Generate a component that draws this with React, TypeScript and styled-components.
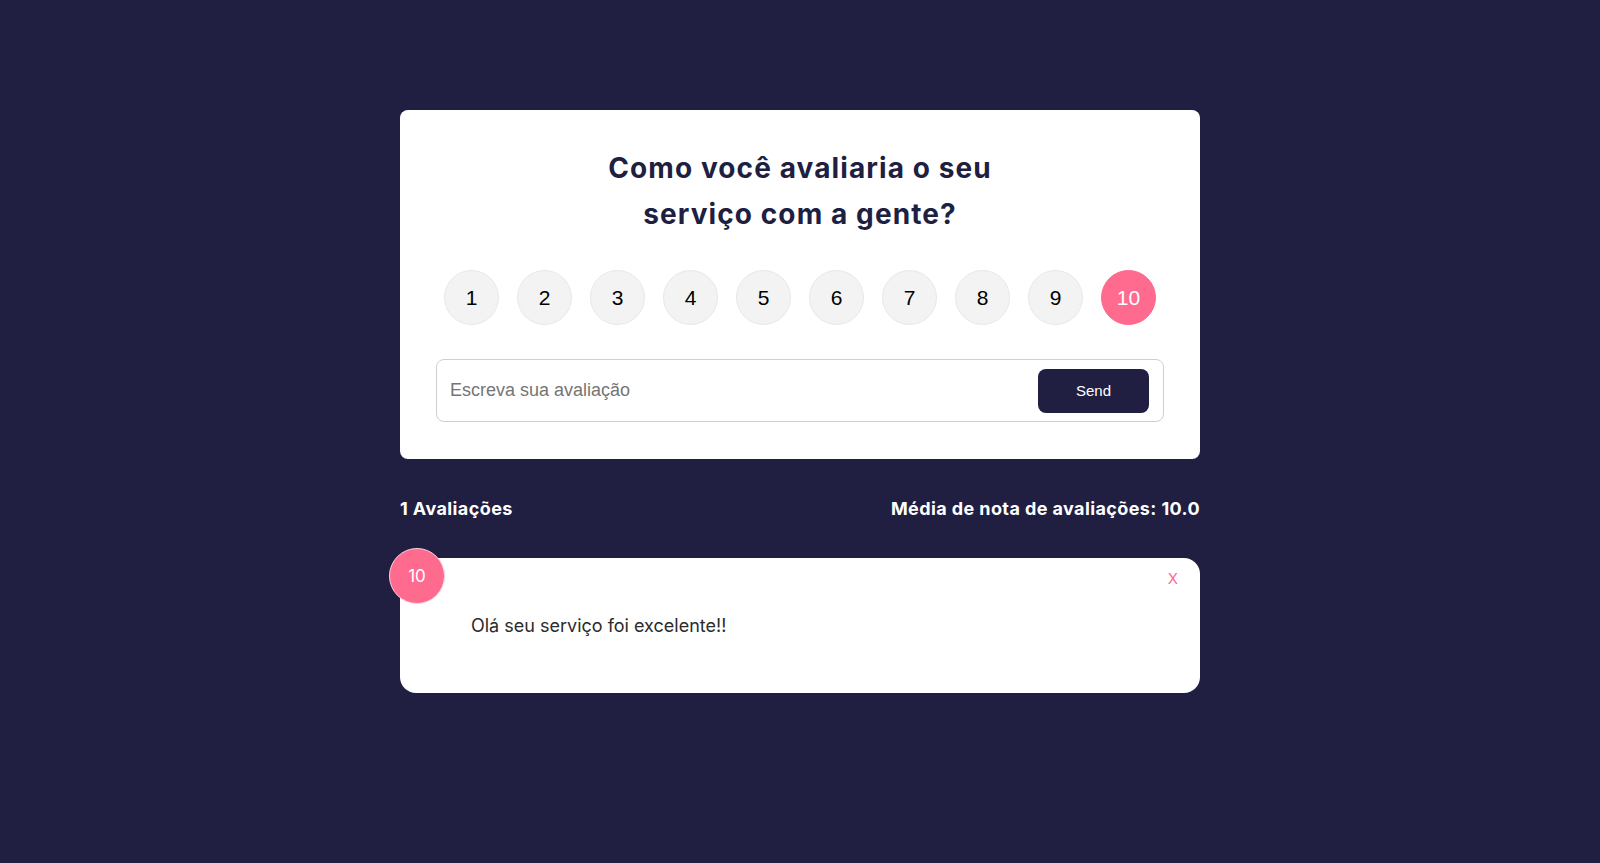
import { useState } from "react";
import styled, { createGlobalStyle } from "styled-components";

const colors = {
  navy: "#201f42",
  pink: "#ff6a8f",
  text: "#2b2b2b",
};

const notas = [1, 2, 3, 4, 5, 6, 7, 8, 9, 10];

export default function App() {
  const [nota, setNota] = useState(10);
  const [texto, setTexto] = useState("");

  return (
    <>
      <GlobalStyle />
      <Page>
        <Wrapper>
          <Card>
            <Title>Como você avaliaria o seu serviço com a gente?</Title>
            <Notas>
              {notas.map((n) => (
                <NotaButton key={n} $active={n === nota} onClick={() => setNota(n)}>
                  {n}
                </NotaButton>
              ))}
            </Notas>
            <InputBox>
              <Input
                placeholder="Escreva sua avaliação"
                value={texto}
                onChange={(e) => setTexto(e.target.value)}
              />
              <SendButton>Send</SendButton>
            </InputBox>
          </Card>

          <Stats>
            <span>1 Avaliações</span>
            <span>Média de nota de avaliações: 10.0</span>
          </Stats>

          <Review>
            <Badge>10</Badge>
            <Close>X</Close>
            <ReviewText>Olá seu serviço foi excelente!!</ReviewText>
          </Review>
        </Wrapper>
      </Page>
    </>
  );
}

const GlobalStyle = createGlobalStyle`
  * { box-sizing: border-box; }
  body {
    margin: 0;
    background: ${colors.navy};
    font-family: Inter, "Noto Sans", sans-serif;
  }
`;

const Page = styled.div`
  min-height: 100vh;
  background: ${colors.navy};
  padding-top: 110px;
`;

const Wrapper = styled.div`
  width: 800px;
  margin: 0 auto;
`;

const Card = styled.div`
  background: #fff;
  border-radius: 8px;
  padding: 35px 36px 37px;
  display: flex;
  flex-direction: column;
  align-items: center;
`;

const Title = styled.h1`
  margin: 0;
  max-width: 430px;
  text-align: center;
  font-family: Inter, "Noto Sans", sans-serif;
  font-size: 28px;
  line-height: 46px;
  font-weight: 700;
  letter-spacing: 1.1px;
  color: ${colors.navy};
`;

const Notas = styled.div`
  display: flex;
  gap: 18px;
  margin-top: 33px;
`;

const NotaButton = styled.button<{ $active: boolean }>`
  width: 55px;
  height: 55px;
  border-radius: 50%;
  border: 1px solid ${(p) => (p.$active ? colors.pink : "#e8e8e8")};
  background: ${(p) => (p.$active ? colors.pink : "#f3f3f3")};
  color: ${(p) => (p.$active ? "#fff" : "#000")};
  font-family: "Liberation Sans", Arial, sans-serif;
  font-size: 21px;
  cursor: pointer;
  padding: 0;
`;

const InputBox = styled.div`
  width: 100%;
  height: 63px;
  margin-top: 34px;
  border: 1px solid #cfcfcf;
  border-radius: 8px;
  display: flex;
  align-items: center;
  padding: 0 14px 0 13px;
`;

const Input = styled.input`
  flex: 1;
  border: none;
  outline: none;
  padding: 0;
  font-family: "Liberation Sans", Arial, sans-serif;
  font-size: 18px;
  color: #333;

  &::placeholder {
    color: #757575;
  }
`;

const SendButton = styled.button`
  width: 111px;
  height: 44px;
  border: none;
  border-radius: 8px;
  background: ${colors.navy};
  color: #fff;
  font-family: "Liberation Sans", Arial, sans-serif;
  font-size: 15px;
  cursor: pointer;
`;

const Stats = styled.div`
  display: flex;
  justify-content: space-between;
  margin-top: 40px;
  color: #fff;
  font-family: Inter, "Noto Sans", sans-serif;
  font-weight: 700;
  font-size: 18px;
  line-height: 20px;
  letter-spacing: 0.4px;
`;

const Review = styled.div`
  position: relative;
  margin-top: 39px;
  background: #fff;
  border-radius: 16px;
  min-height: 135px;
  padding: 56px 70px 55px 71px;
`;

const Badge = styled.div`
  position: absolute;
  top: -10px;
  left: -11px;
  width: 56px;
  height: 56px;
  border-radius: 50%;
  background: ${colors.pink};
  border: 1px solid #ffd3de;
  color: #fff;
  display: flex;
  align-items: center;
  justify-content: center;
  font-family: Inter, "Noto Sans", sans-serif;
  font-size: 17px;
`;

const Close = styled.button`
  position: absolute;
  top: 9px;
  right: 20px;
  border: none;
  background: none;
  color: ${colors.pink};
  font-family: Inter, "Noto Sans", sans-serif;
  font-size: 15px;
  cursor: pointer;
  padding: 2px;
`;

const ReviewText = styled.p`
  margin: 0;
  color: ${colors.text};
  font-family: Inter, "Noto Sans", sans-serif;
  font-size: 18px;
  line-height: 24px;
`;
